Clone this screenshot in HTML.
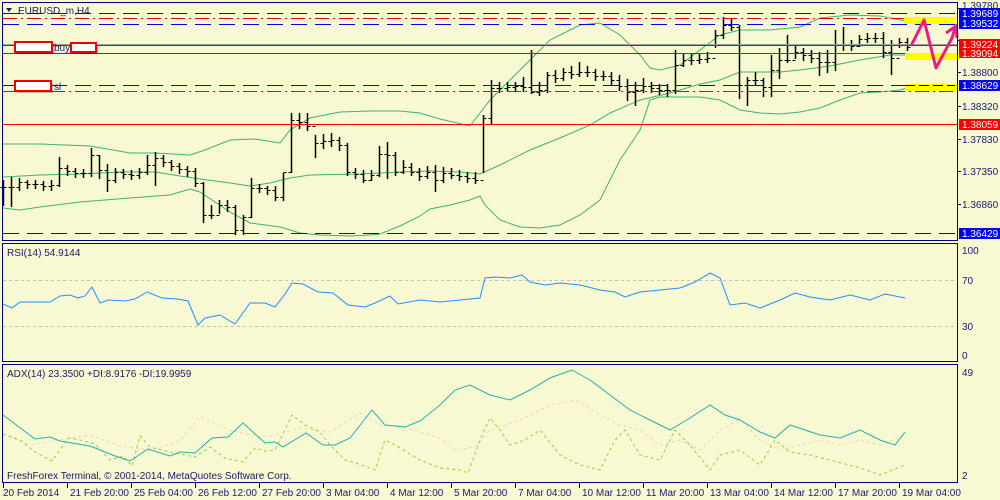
<!DOCTYPE html>
<html><head><meta charset="utf-8"><style>
html,body{margin:0;padding:0;background:#F8F8D2;}
svg{display:block;font-family:"Liberation Sans",sans-serif;font-size:10px;}
</style></head><body>
<svg id="s" width="1000" height="500" xmlns="http://www.w3.org/2000/svg">
<rect width="1000" height="500" fill="#F8F8D2"/>
<g id="main"></g>
<g stroke-width="1" fill="none">
<line x1="3" y1="13.5" x2="957" y2="13.5" stroke="#0000FF" stroke-dasharray="16,8"/>
<line x1="3" y1="18.5" x2="957" y2="18.5" stroke="#E0001E" stroke-dasharray="14,4,2,4"/>
<line x1="3" y1="24.5" x2="957" y2="24.5" stroke="#0000FF" stroke-dasharray="16,8"/>
<line x1="3" y1="44.5" x2="957" y2="44.5" stroke="#A0A0A0"/>
<line x1="3" y1="45.5" x2="957" y2="45.5" stroke="#E00000"/>
<line x1="3" y1="53.5" x2="957" y2="53.5" stroke="#E00000"/>
<line x1="3" y1="85.5" x2="957" y2="85.5" stroke="#0000FF" stroke-dasharray="16,8"/>
<line x1="3" y1="91.5" x2="957" y2="91.5" stroke="#E0001E" stroke-dasharray="14,4,2,4"/>
<line x1="3" y1="124.5" x2="957" y2="124.5" stroke="#FF0000"/>
<line x1="3" y1="233.5" x2="957" y2="233.5" stroke="#0000FF" stroke-dasharray="16,8"/>
<line x1="3" y1="280.5" x2="957" y2="280.5" stroke="#C0C0C0" stroke-dasharray="3,3"/>
<line x1="3" y1="326.5" x2="957" y2="326.5" stroke="#C0C0C0" stroke-dasharray="3,3"/>
</g>
<g id="ind"></g>
<rect x="904" y="17" width="52" height="7" fill="#FFFF00"/>
<rect x="905" y="53" width="55" height="7" fill="#FFFF00"/>
<rect x="905" y="84" width="52" height="7" fill="#FFFF00"/>
<line x1="905" y1="85.5" x2="955" y2="85.5" stroke="#000" stroke-dasharray="10,4"/>
<polyline points="911,46 924,20 936,68 952,38 955,28" fill="none" stroke="#E8207A" stroke-width="3" stroke-linejoin="round"/>
<polyline points="946,33 956,26 957,38" fill="none" stroke="#E8207A" stroke-width="3"/>
<g fill="none" stroke="#000080" stroke-width="1">
<rect x="2.5" y="2.5" width="955" height="238"/>
<rect x="2.5" y="243.5" width="955" height="118"/>
<rect x="2.5" y="364.5" width="955" height="118"/>
</g>
<g id="ticks" stroke="#000080"></g>
<g fill="#1a1a70">
<text x="18" y="14">EURUSD_m,H4</text>
<text x="54" y="51">buy</text>
<text x="54" y="90">sl</text>
<text x="7" y="256">RSI(14) 54.9144</text>
<text x="7" y="377">ADX(14) 23.3500 +DI:8.9176 -DI:19.9959</text>
<text x="7" y="479">FreshForex Terminal, © 2001-2014, MetaQuotes Software Corp.</text>
</g>
<path d="M6 8 L12 8 L9 12 Z" fill="#1a1a70"/>
<g fill="#000" opacity="0.25">
<rect x="17" y="44" width="37" height="10"/>
<rect x="73" y="45" width="25" height="9"/>
<rect x="17" y="83" width="36" height="10"/>
</g>
<g fill="#fff" stroke="#F00000" stroke-width="2">
<rect x="15" y="42" width="37" height="10"/>
<rect x="71" y="43" width="25" height="9"/>
<rect x="15" y="81" width="36" height="10"/>
</g>
<g fill="#1a1a70">
<text x="962" y="9">1.39780</text>
<text x="962" y="76">1.38800</text>
<text x="962" y="110">1.38320</text>
<text x="962" y="143">1.37830</text>
<text x="962" y="175">1.37350</text>
<text x="962" y="208">1.36860</text>
<text x="962" y="254">100</text>
<text x="962" y="284">70</text>
<text x="962" y="330">30</text>
<text x="962" y="359">0</text>
<text x="962" y="376">49</text>
<text x="962" y="479">2</text>
</g>
<rect x="959" y="8" width="41" height="10" fill="#0000FF"/>
<rect x="959" y="18" width="41" height="11" fill="#0000FF"/>
<rect x="959" y="39" width="41" height="10" fill="#FF0000"/>
<rect x="959" y="48" width="41" height="10" fill="#FF0000"/>
<rect x="959" y="80" width="41" height="11" fill="#0000FF"/>
<rect x="959" y="119" width="41" height="11" fill="#FF0000"/>
<rect x="959" y="228" width="41" height="11" fill="#0000FF"/>
<g fill="#fff">
<text x="962" y="17">1.39689</text>
<text x="962" y="27">1.39532</text>
<text x="962" y="48">1.39224</text>
<text x="962" y="57">1.39094</text>
<text x="962" y="89">1.38629</text>
<text x="962" y="128">1.38059</text>
<text x="962" y="237">1.36429</text>
</g>
<g fill="#1a1a70" id="tl"></g>
</svg>
<script>
var NS="http://www.w3.org/2000/svg";
function el(p,t,a){var e=document.createElementNS(NS,t);for(var k in a)e.setAttribute(k,a[k]);p.appendChild(e);return e;}
var main=document.getElementById('main'),ind=document.getElementById('ind');
function pl(g,pts,col,dash){var s=pts.map(function(p){return p[0]+','+p[1]}).join(' ');var a={points:s,fill:'none',stroke:col,'stroke-width':1};if(dash)a['stroke-dasharray']=dash;el(g,'polyline',a);}
pl(main,[[3,144],[40,144],[90,146],[130,153],[155,153],[190,155],[205,150],[230,140],[255,139],[280,143],[290,130],[310,118],[340,112],[370,111],[400,111],[420,113],[440,119],[470,126],[490,100],[520,70],[550,40],[580,25],[600,23],[620,35],[640,55],[650,68],[660,70],[680,65],[700,50],[720,35],[740,30],[770,30],[800,27],[820,18],[850,15],[880,16],[900,20],[910,22]],'#3CB371');
pl(main,[[3,177],[40,175],[80,174],[120,172],[155,172],[180,176],[200,179],[230,183],[250,186],[270,183],[290,178],[310,175],[360,174],[400,172],[430,171],[460,172],[480,174],[500,165],[530,150],[560,138],[590,125],[610,113],[640,100],[670,93],[700,84],[720,80],[740,72],[760,72],[780,72],[800,70],[830,66],[860,60],[890,55],[910,55]],'#3CB371');
pl(main,[[3,208],[20,210],[40,207],[80,202],[130,198],[170,195],[190,189],[200,192],[230,212],[250,223],[280,227],[300,233],[320,235],[350,236],[370,235],[380,234],[400,226],[420,216],[430,209],[450,205],[470,200],[480,196],[485,205],[500,220],[520,227],[540,228],[560,225],[580,215],[600,200],[620,160],[640,130],[650,100],[660,97],[700,97],[720,100],[740,110],[760,113],[780,114],[800,112],[820,108],[840,100],[860,93],[880,92],[900,90],[910,87]],'#3CB371');
var B=[[3,187,180,205],[11,187,177,206],[19,182,178,190],[27,184,180,188],[35,184,180,188],[43,186,181,190],[51,185,180,190],[59,168,157,186],[67,171,165,175],[75,173,168,177],[83,173,169,177],[91,155,148,176],[99,170,155,178],[107,180,164,191],[115,172,168,182],[123,174,169,178],[131,175,170,179],[139,172,168,178],[147,165,155,174],[155,158,152,185],[163,162,155,166],[171,166,160,170],[179,169,163,173],[187,171,166,176],[195,183,168,186],[203,215,182,222],[211,215,205,218],[219,205,200,213],[227,207,200,211],[235,230,205,234],[243,217,215,234],[251,188,178,217],[259,188,184,192],[267,190,186,194],[275,197,186,200],[283,172,173,200],[291,120,113,172],[299,122,113,128],[307,126,113,130],[315,143,135,157],[323,141,134,148],[331,140,133,146],[339,145,137,150],[347,172,143,175],[355,174,168,178],[363,180,170,182],[371,175,170,180],[379,154,146,176],[387,155,142,178],[395,172,152,175],[403,167,160,173],[411,172,163,175],[419,176,168,180],[427,172,166,178],[435,180,165,191],[443,173,167,182],[451,175,168,178],[459,176,170,180],[467,178,172,182],[475,180,172,183],[483,118,115,172],[491,88,80,123],[499,88,82,92],[507,87,82,91],[515,86,82,90],[523,87,77,91],[531,92,50,93],[539,90,82,95],[547,75,72,92],[555,78,70,82],[563,72,68,80],[571,74,66,78],[579,72,62,76],[587,72,66,76],[595,76,69,80],[603,76,71,80],[611,80,72,84],[619,86,75,90],[627,92,79,100],[635,90,82,105],[643,86,78,92],[651,88,82,92],[659,90,84,94],[667,90,84,96],[675,65,50,93],[683,60,53,66],[691,60,54,64],[699,59,54,63],[707,58,52,62],[715,35,30,47],[723,25,17,38],[731,27,18,30],[739,85,25,98],[747,80,77,105],[755,80,72,85],[763,87,78,96],[771,70,55,96],[779,60,48,78],[787,60,35,62],[795,52,46,58],[803,55,48,60],[811,58,50,62],[819,62,52,75],[827,62,50,72],[835,44,30,70],[843,44,27,50],[851,46,40,50],[859,39,35,46],[867,38,33,42],[875,38,33,42],[883,52,32,57],[891,58,40,74],[899,42,38,47],[907,47,38,50]];
var prev=B[0][1];
B.forEach(function(b){var x=b[0]+.5;el(main,'line',{x1:x,y1:b[2],x2:x,y2:b[3]+1,stroke:'#000','stroke-width':1.5});
el(main,'line',{x1:x-3,y1:prev+.5,x2:x,y2:prev+.5,stroke:'#000'});el(main,'line',{x1:x,y1:b[1]+.5,x2:x+3,y2:b[1]+.5,stroke:'#000'});prev=b[1];});
pl(ind,[[3,304],[12,308],[20,302],[50,302],[60,296],[70,295],[78,298],[85,296],[92,287],[100,303],[108,300],[125,301],[135,299],[147,292],[162,298],[178,299],[188,301],[198,325],[205,318],[220,315],[235,324],[250,303],[265,303],[275,307],[285,294],[292,283],[303,284],[318,292],[333,293],[348,305],[365,307],[375,303],[390,296],[398,304],[420,300],[440,302],[460,300],[480,298],[485,278],[495,277],[510,278],[522,275],[530,282],[545,285],[560,283],[580,285],[600,290],[615,292],[625,297],[640,292],[660,290],[680,288],[695,282],[710,273],[720,278],[730,305],[745,303],[760,308],[780,300],[795,293],[810,297],[830,300],[850,295],[870,300],[885,294],[895,296],[905,298]],'#1E90FF');
pl(ind,[[3,434],[30,445],[60,440],[90,435],[120,446],[150,450],[180,441],[200,417],[230,430],[260,437],[275,435],[300,428],[330,432],[360,413],[380,425],[400,426],[420,432],[440,438],[455,450],[475,447],[490,430],[520,420],[550,405],[575,400],[600,415],[620,425],[640,430],[660,445],[680,440],[700,450],[720,430],[740,420],[760,440],[780,450],[800,445],[820,440],[840,445],[860,440],[880,445],[905,435]],'#F5D0B0','3,3');
pl(ind,[[3,434],[20,440],[35,452],[52,461],[60,450],[68,438],[80,440],[95,444],[110,460],[123,456],[132,466],[140,436],[150,447],[170,452],[195,457],[210,447],[225,458],[243,462],[255,448],[265,451],[275,450],[292,415],[305,425],[320,432],[330,445],[345,460],[365,466],[375,470],[385,440],[395,445],[420,460],[440,468],[460,470],[468,473],[480,440],[490,418],[500,430],[510,445],[525,440],[540,430],[560,455],[580,465],[600,470],[615,440],[625,430],[640,455],[660,460],[675,430],[690,445],[710,470],[720,455],[740,450],[760,465],[775,440],[790,452],[810,455],[830,460],[860,468],[880,475],[905,465]],'#9ACD32','3,3');
pl(ind,[[3,415],[35,439],[50,437],[60,441],[90,446],[115,456],[130,461],[148,449],[170,456],[180,452],[195,453],[212,438],[228,437],[243,423],[265,443],[275,442],[283,447],[306,433],[323,445],[335,445],[350,438],[372,410],[385,425],[405,427],[420,421],[440,405],[455,390],[470,385],[490,395],[510,400],[530,390],[550,378],[572,370],[590,380],[610,395],[630,410],[650,420],[670,430],[690,418],[710,405],[725,415],[740,420],[760,432],[775,438],[790,425],[805,430],[820,435],[840,438],[860,430],[880,440],[895,445],[905,432]],'#20B2AA');
var tk=document.getElementById('ticks'),tl=document.getElementById('tl');
[8,40,72,106,139,171,204].forEach(function(y){el(tk,'line',{x1:958,y1:y+.5,x2:961,y2:y+.5});});
var L=['20 Feb 2014','21 Feb 20:00','25 Feb 04:00','26 Feb 12:00','27 Feb 20:00','3 Mar 04:00','4 Mar 12:00','5 Mar 20:00','7 Mar 04:00','10 Mar 12:00','11 Mar 20:00','13 Mar 04:00','14 Mar 12:00','17 Mar 20:00','19 Mar 04:00'];
L.forEach(function(t,i){var x=3+64*i;el(tk,'line',{x1:x+.5,y1:483,x2:x+.5,y2:488});var e=el(tl,'text',{x:x+(i==0?0:3),y:496});e.textContent=t;});
</script>
</body></html>
